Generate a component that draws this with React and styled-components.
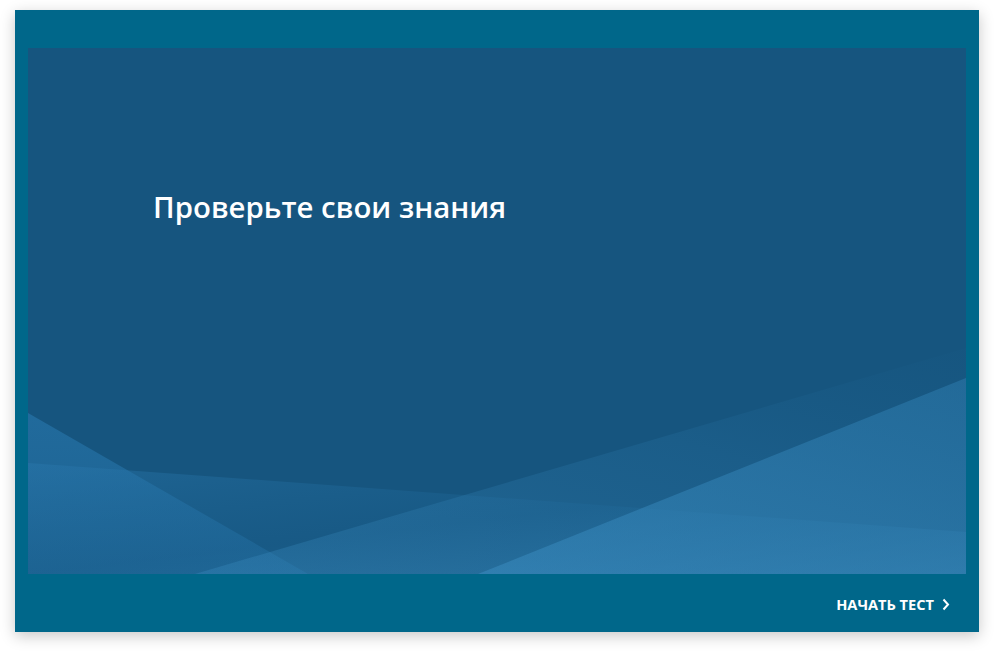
import React from "react";
import styled, { createGlobalStyle } from "styled-components";

const Global = createGlobalStyle`
  html, body { margin: 0; padding: 0; background: #ffffff; }
  body { font-family: "Open Sans", "Noto Sans", sans-serif; }
`;

const Page = styled.div`
  width: 994px;
  height: 652px;
  box-sizing: border-box;
  padding: 10px 15px 20px 15px;
`;

const Frame = styled.div`
  width: 964px;
  height: 622px;
  background: #00678a;
  box-sizing: border-box;
  padding: 38px 13px 0 13px;
  display: flex;
  flex-direction: column;
  box-shadow: 0 4px 14px rgba(0, 0, 0, 0.22);
`;

const Slide = styled.div`
  position: relative;
  width: 938px;
  height: 526px;
  background: #16557f;
  overflow: hidden;
`;

const Backdrop = styled.svg`
  position: absolute;
  left: 0;
  top: 0;
  width: 938px;
  height: 526px;
`;

const Title = styled.h1`
  position: relative;
  margin: 0;
  padding: 139px 0 0 125px;
  font-family: "Open Sans", sans-serif;
  font-weight: 600;
  font-size: 29.4px;
  line-height: 40px;
  color: #ffffff;
`;

const Footer = styled.div`
  flex: 1;
  display: flex;
  align-items: center;
  justify-content: flex-end;
  padding-right: 16px;
`;

const NextButton = styled.button`
  display: flex;
  align-items: center;
  gap: 8px;
  background: none;
  border: none;
  padding: 0;
  margin-top: 2px;
  cursor: pointer;
  font-family: "Open Sans", sans-serif;
  font-weight: 700;
  font-size: 14.6px;
  color: #ffffff;
  text-transform: uppercase;
`;

export default function App() {
  return (
    <>
      <Global />
      <Page>
        <Frame>
          <Slide>
            <Backdrop viewBox="0 0 938 526">
              <defs>
                <linearGradient id="gA" x1="0" y1="0" x2="0" y2="1">
                  <stop offset="0" stopColor="#2a7cb4" stopOpacity="0.55" />
                  <stop offset="1" stopColor="#2a7cb4" stopOpacity="0.35" />
                </linearGradient>
                <linearGradient id="gB" x1="0" y1="0" x2="1" y2="1">
                  <stop offset="0" stopColor="#2a78ad" stopOpacity="0.45" />
                  <stop offset="0.5" stopColor="#1c6494" stopOpacity="0.3" />
                  <stop offset="1" stopColor="#3a8ab8" stopOpacity="0.5" />
                </linearGradient>
                <linearGradient id="gC" x1="0" y1="1" x2="1" y2="0">
                  <stop offset="0" stopColor="#3a8cc0" stopOpacity="0.35" />
                  <stop offset="0.6" stopColor="#2a76a8" stopOpacity="0.25" />
                  <stop offset="1" stopColor="#1a5f8c" stopOpacity="0.1" />
                </linearGradient>
                <linearGradient id="gD" x1="0" y1="1" x2="1" y2="0">
                  <stop offset="0" stopColor="#3a8cc0" stopOpacity="0.55" />
                  <stop offset="1" stopColor="#2c7aac" stopOpacity="0.55" />
                </linearGradient>
              </defs>
              <polygon points="0,365 280,526 0,526" fill="url(#gA)" />
              <polygon points="0,415 938,484 938,526 0,526" fill="url(#gB)" />
              <polygon points="167,526 938,300 938,526" fill="url(#gC)" />
              <polygon points="450,526 938,330 938,526" fill="url(#gD)" />
            </Backdrop>
            <Title>Проверьте свои знания</Title>
          </Slide>
          <Footer>
            <NextButton>
              НАЧАТЬ ТЕСТ
              <svg width="8" height="13" viewBox="0 0 8 13">
                <path d="M1.5 1.5 L6 6.5 L1.5 11.5" fill="none" stroke="#ffffff" strokeWidth="2" />
              </svg>
            </NextButton>
          </Footer>
        </Frame>
      </Page>
    </>
  );
}
